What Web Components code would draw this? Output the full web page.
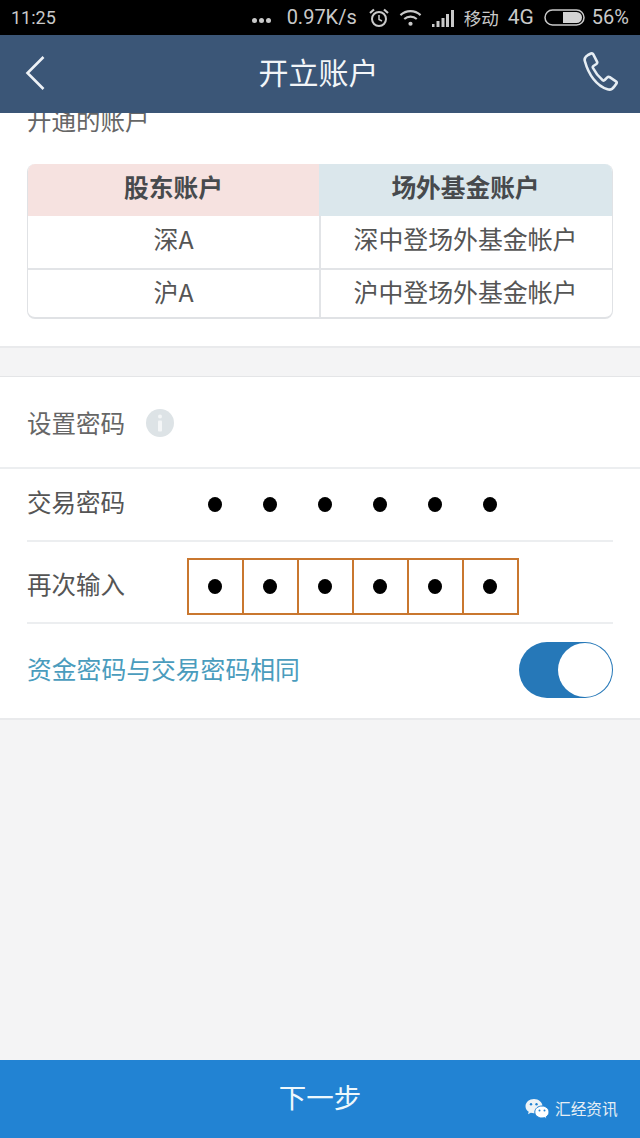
<!DOCTYPE html>
<html lang="zh">
<head>
<meta charset="utf-8">
<title>开立账户</title>
<style>
    html, body { margin: 0; padding: 0; }
    body {
        width: 640px;
        height: 1138px;
        overflow: hidden;
        background: #f4f4f5;
        font-family: "Noto Sans CJK SC", "Liberation Sans", sans-serif;
        color: #555;
    }
    open-account-page { height: 1138px; }
</style>
</head>
<body>
<open-account-page>
    <status-bar slot="status"></status-bar>
    <nav-bar slot="nav">开立账户</nav-bar>

    <form-section flush>
        <account-table></account-table>
    </form-section>

    <form-section>
        <section-title>设置密码</section-title>
        <pin-row label="交易密码" height="73"></pin-row>
        <pin-row label="再次输入" height="82" boxed></pin-row>
        <same-password-row>资金密码与交易密码相同</same-password-row>
    </form-section>

    <next-button slot="footer">下一步</next-button>
</open-account-page>

<script>
class OpenAccountPage extends HTMLElement {
    constructor() {
        super();
        this.attachShadow({ mode: 'open' });
        this.shadowRoot.innerHTML = `
            <style>
                :host { display: flex; flex-direction: column; }
                main { flex: 1; min-height: 0; overflow: hidden; }
            </style>
            <slot name="status"></slot>
            <slot name="nav"></slot>
            <main><slot></slot></main>
            <slot name="footer"></slot>
        `;
    }
}

class StatusBar extends HTMLElement {
    constructor() {
        super();
        this.attachShadow({ mode: 'open' });
        this.shadowRoot.innerHTML = `
            <style>
                :host {
                    display: flex;
                    align-items: center;
                    height: 35px;
                    padding: 0 11px;
                    background: #000;
                    color: #c9c9c9;
                    font: 20px/35px Roboto, "Noto Sans CJK SC", sans-serif;
                }
                .time { flex: 1; font-size: 18px; }
                .dots { display: flex; gap: 2px; margin-right: 16px; padding-top: 5px; }
                .dots i { width: 5px; height: 5px; border-radius: 50%; background: #c9c9c9; }
                svg { display: block; flex: none; }
                .speed { margin-right: 12px; }
                .carrier { font: 17.500px/35px "Noto Sans CJK SC", sans-serif; margin: 0 9px 0 10px; }
                .net { margin-right: 10px; font-size: 21px; }
                .batt { margin-right: 7px; }
            </style>
            <span class="time">11:25</span>
            <span class="dots"><i></i><i></i><i></i></span>
            <span class="speed">0.97K/s</span>
            <svg width="20" height="22" viewBox="0 0 20 22" fill="none" stroke="#c9c9c9" style="margin-right:10px">
                <circle cx="10" cy="12" r="7" stroke-width="2"/>
                <path d="M10 8v4.500l3 1.500" stroke-width="1.500"/>
                <path d="M1 6l4-3.500M19 6l-4-3.500" stroke-width="2.200"/>
            </svg>
            <svg width="23" height="20" viewBox="0 0 24 20" fill="none" stroke="#c9c9c9" stroke-width="2.200" style="margin-right:10px">
                <path d="M1.500 7c6-5.500 15-5.500 21 0"/>
                <path d="M5.500 11c3.700-3.300 9.300-3.300 13 0"/>
                <circle cx="12" cy="16" r="2.200" fill="#c9c9c9" stroke="none"/>
            </svg>
            <svg width="22" height="18" viewBox="0 0 22 18" fill="#c9c9c9">
                <rect x="0" y="15" width="2.500" height="3"/>
                <rect x="4.500" y="12" width="3" height="6"/>
                <rect x="9.500" y="9" width="3" height="9"/>
                <rect x="14" y="5" width="3" height="13"/>
                <rect x="19" y="1" width="3" height="17"/>
            </svg>
            <span class="carrier">移动</span>
            <span class="net">4G</span>
            <svg class="batt" width="41" height="17" viewBox="0 0 41 17">
                <rect x="1" y="1" width="39" height="15" rx="7.500" fill="none" stroke="#c9c9c9" stroke-width="1.500"/>
                <path d="M19 3h13.500a5.500 5.500 0 0 1 0 11H19z" fill="#d4d4d4"/>
            </svg>
            <span>56%</span>
        `;
    }
}

class NavBar extends HTMLElement {
    constructor() {
        super();
        this.attachShadow({ mode: 'open' });
        this.shadowRoot.innerHTML = `
            <style>
                :host {
                    display: grid;
                    grid-template-columns: 1fr auto 1fr;
                    position: relative;
                    z-index: 1;
                    align-items: center;
                    height: 78px;
                    padding: 0 18px;
                    background: #3b5677;
                    color: #f2f5f8;
                }
                .title {
                    font-size: 30px;
                    line-height: 72px;
                    padding-bottom: 6px;
                    padding-right: 3px;
                }
                svg { display: block; margin-bottom: 2px; }
                .back { margin-left: 6px; }
                .phone { justify-self: end; }
            </style>
            <svg class="back" width="22" height="36" viewBox="0 0 22 36" fill="none" stroke="#eef2f6" stroke-width="2.600">
                <path d="M19.500 2L3.500 18l16 16"/>
            </svg>
            <div class="title"><slot></slot></div>
            <svg class="phone" width="40" height="42" viewBox="0 0 40 42" fill="none" stroke="#e6edf3" stroke-width="2.600" stroke-linejoin="round">
                <path d="M3 9.500C2 7 3.500 4.500 6 3l3-1.500c1-.4 1.800 0 2.300.9l3.700 7.200c.5 1 .2 1.800-.6 2.400l-3 2c-.7.5-.8 1.200-.4 2 2.500 5 5.600 8.800 9.700 12.200.7.500 1.400.5 2-.2l2.600-2.600c.7-.7 1.500-.8 2.400-.2l6.200 4.100c.9.600 1 1.500.4 2.400l-1.800 2.600c-1.700 2.500-4.300 4-7 3C14.500 34 6.500 22.500 3 9.500z"/>
            </svg>
        `;
    }
}

class FormSection extends HTMLElement {
    constructor() {
        super();
        this.attachShadow({ mode: 'open' });
        this.shadowRoot.innerHTML = `
            <style>
                :host {
                    display: block;
                    background: #fff;
                    border-top: 1px solid #e4e5e7;
                    border-bottom: 2px solid #e9eaec;
                    margin-bottom: 28px;
                }
                :host([flush]) {
                    border-top: 0;
                    margin-top: -20px;
                    padding-top: 0;
                }
                :host(:last-of-type) { margin-bottom: 0; }
            </style>
            <slot></slot>
        `;
    }
}

class AccountTable extends HTMLElement {
    constructor() {
        super();
        this.attachShadow({ mode: 'open' });
        this.shadowRoot.innerHTML = `
            <style>
                :host { display: block; padding: 0 27px 27px; }
                .heading {
                    font-size: 24.500px;
                    line-height: 34px;
                    color: #666;
                    margin-bottom: 27px;
                    padding-top: 10px;
                }
                .grid {
                    display: grid;
                    grid-template-columns: 291px 1fr;
                    grid-template-rows: 52px 52px 51px;
                    height: 155px;
                    box-sizing: border-box;
                    border: 1px solid #e0e2e5;
                    border-bottom-width: 2px;
                    border-top: 0;
                    border-radius: 8px;
                    overflow: hidden;
                    font-size: 24.900px;
                    color: #555;
                }
                .grid > div {
                    display: flex;
                    align-items: center;
                    justify-content: center;
                    padding-bottom: 8px;
                    box-sizing: border-box;
                }
                .head { font-weight: 700; font-size: 24.700px; color: #474a4d; }
                .a { background: #f6e2e0; }
                .b { background: #dbe7ec; }
                .grid > .r { border-left: 2px solid #e2e4e7; padding-right: 2px; }
                .t { border-top: 2px solid #e2e4e7; }
            </style>
            <div class="heading">开通的账户</div>
            <div class="grid">
                <div class="head a">股东账户</div>
                <div class="head b">场外基金账户</div>
                <div>深A</div>
                <div class="r">深中登场外基金帐户</div>
                <div class="t">沪A</div>
                <div class="r t">沪中登场外基金帐户</div>
            </div>
        `;
    }
}

class SectionTitle extends HTMLElement {
    constructor() {
        super();
        this.attachShadow({ mode: 'open' });
        this.shadowRoot.innerHTML = `
            <style>
                :host {
                    display: flex;
                    align-items: center;
                    gap: 21px;
                    height: 92px;
                    padding: 1px 27px 0;
                    box-sizing: border-box;
                    border-bottom: 2px solid #eceef0;
                    font-size: 24.500px;
                    color: #666;
                }
                svg { display: block; }
            </style>
            <slot></slot>
            <svg width="28" height="28" viewBox="0 0 28 28">
                <circle cx="14" cy="14" r="14" fill="#dde3e6"/>
                <circle cx="14" cy="7.500" r="2" fill="#f4f6f7"/>
                <rect x="12" y="11.500" width="4" height="11" rx="1" fill="#f4f6f7"/>
            </svg>
        `;
    }
}

class PinRow extends HTMLElement {
    connectedCallback() {
        if (this.shadowRoot) return;
        this.attachShadow({ mode: 'open' });
        const cells = '<span class="cell"><i></i></span>'.repeat(6);
        this.shadowRoot.innerHTML = `
            <style>
                :host {
                    display: flex;
                    align-items: center;
                    box-sizing: border-box;
                    height: ${this.getAttribute('height')}px;
                    margin: 0 27px;
                    border-bottom: 2px solid #eceef0;
                    font-size: 24.500px;
                    color: #555;
                }
                .label { width: 160px; flex: none; padding-bottom: 7px; }
                .pin { display: flex; }
                .cell {
                    display: flex;
                    align-items: center;
                    justify-content: center;
                    box-sizing: border-box;
                    width: 55px;
                    height: 57px;
                }
                .cell i { width: 14px; height: 15px; border-radius: 50%; background: #000; }
                :host([boxed]) .label { padding: 3px 0 0; }
                :host([boxed]) .pin { border: 2px solid #c9772f; margin: 8px 0 0; }
                :host([boxed]) .cell { height: 53px; padding-right: 2px; }
                :host([boxed]) .cell + .cell { border-left: 2px solid #c9772f; }
                :host([boxed]) .cell:first-child { width: 53px; }
            </style>
            <span class="label">${this.getAttribute('label')}</span>
            <div class="pin">${cells}</div>
        `;
    }
}

class SamePasswordRow extends HTMLElement {
    constructor() {
        super();
        this.attachShadow({ mode: 'open' });
        this.shadowRoot.innerHTML = `
            <style>
                :host {
                    display: flex;
                    align-items: center;
                    justify-content: space-between;
                    box-sizing: border-box;
                    height: 94px;
                    padding: 0 27px 2px;
                    font-size: 24.800px;
                    color: #4a9cbd;
                }
                .label { padding-bottom: 4px; }
                .switch {
                    box-sizing: border-box;
                    display: flex;
                    justify-content: flex-end;
                    width: 94px;
                    height: 56px;
                    border-radius: 28px;
                    background: #2678b8;
                    padding: 1px;
                }
                .knob {
                    width: 54px;
                    height: 54px;
                    border-radius: 50%;
                    background: #fff;
                }
            </style>
            <span class="label"><slot></slot></span>
            <span class="switch"><span class="knob"></span></span>
        `;
    }
}

class NextButton extends HTMLElement {
    constructor() {
        super();
        this.attachShadow({ mode: 'open' });
        this.shadowRoot.innerHTML = `
            <style>
                :host {
                    display: flex;
                    position: relative;
                    align-items: center;
                    justify-content: center;
                    height: 78px;
                    background: #2283d3;
                    color: #eef8fc;
                    font-size: 27.500px;
                }
                .label { padding-bottom: 6px; }
                .mark {
                    position: absolute;
                    left: 525px;
                    top: 37px;
                    display: flex;
                    align-items: center;
                    gap: 5px;
                    font-size: 15.700px;
                    line-height: 24px;
                    color: #e6eef4;
                }
                svg { display: block; }
            </style>
            <span class="label"><slot></slot></span>
            <span class="mark">
                <svg width="25" height="22" viewBox="0 0 25 22">
                    <path d="M9 1C4.300 1 .5 4.200.5 8.200c0 2.300 1.300 4.300 3.200 5.600L3 16.200l2.800-1.400c1 .3 2 .5 3.200.5 4.700 0 8.500-3.200 8.500-7.100C17.500 4.300 13.700 1 9 1z" fill="#eef3f6"/>
                    <path d="M17 8c-4 0-7.200 2.700-7.200 6s3.200 6 7.200 6c.9 0 1.700-.1 2.500-.4l2.300 1.300-.6-2.100c1.700-1.100 2.800-2.900 2.800-4.800 0-3.300-3.200-6-7-6z" fill="#fff" stroke="#2283d3" stroke-width="1"/>
                    <circle cx="6" cy="6.300" r="1.200" fill="#2283d3"/>
                    <circle cx="11.500" cy="6.300" r="1.200" fill="#2283d3"/>
                    <circle cx="14.500" cy="12.500" r="1" fill="#2283d3"/>
                    <circle cx="19.500" cy="12.500" r="1" fill="#2283d3"/>
                </svg>
                汇经资讯
            </span>
        `;
    }
}

customElements.define('open-account-page', OpenAccountPage);
customElements.define('status-bar', StatusBar);
customElements.define('nav-bar', NavBar);
customElements.define('form-section', FormSection);
customElements.define('account-table', AccountTable);
customElements.define('section-title', SectionTitle);
customElements.define('pin-row', PinRow);
customElements.define('same-password-row', SamePasswordRow);
customElements.define('next-button', NextButton);
</script>
</body>
</html>
